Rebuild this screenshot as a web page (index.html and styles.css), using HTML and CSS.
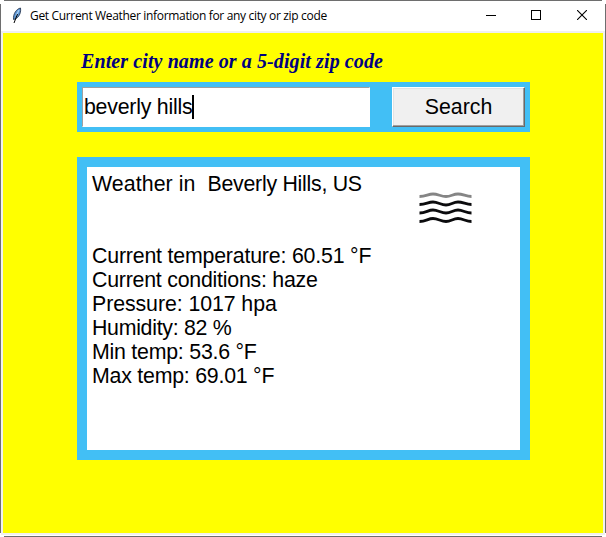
FILE: index.html
```html
<!DOCTYPE html>
<html lang="en">
<head>
<meta charset="utf-8">
<title>Get Current Weather information for any city or zip code</title>
<link rel="stylesheet" href="styles.css">
</head>
<body>
<div class="window">
  <header class="titlebar">
    <svg class="feather" width="12" height="17" viewBox="0 0 12 17">
      <path d="M9.500 1C5.500 2 2 6.500 2.500 12.500C6.500 12 10.500 7 9.500 1Z" fill="#5b93d0" stroke="#1c2a42" stroke-width=".8"/>
      <path d="M8 3L5 9" stroke="#a9d0f5" stroke-width="1.200"/>
      <path d="M6.500 7L3 16" stroke="#000" stroke-width="1"/>
    </svg>
    <span class="title">Get Current Weather information for any city or zip code</span>
    <div class="controls">
      <svg width="10" height="10" viewBox="0 0 10 10" shape-rendering="crispEdges"><path d="M0 5.500H10" stroke="#000"/></svg>
      <svg width="10" height="10" viewBox="0 0 10 10" shape-rendering="crispEdges"><path d="M.5 .5H9.500V9.500H.5Z" fill="none" stroke="#000"/></svg>
      <svg class="close" width="10" height="10" viewBox="0 0 10 10"><path d="M0 0L10 10M10 0L0 10" stroke="#000" stroke-width="1.100"/></svg>
    </div>
  </header>
  <main class="client">
    <div class="prompt">Enter city name or a 5-digit zip code</div>
    <div class="search">
      <div class="entry"><span class="query">beverly hills</span><span class="caret"></span></div>
      <button class="button" type="button">Search</button>
    </div>
    <section class="result">
      <div class="report">
        <div class="place"><span class="lead">Weather in  </span><span class="city">Beverly Hills, US</span></div>
        <div class="temperature">Current temperature: 60.51 °F</div>
        <div class="reading">Current conditions: haze</div>
        <div class="pressure">Pressure: 1017 hpa</div>
        <div class="humidity">Humidity: 82 %</div>
        <div class="reading">Min temp: 53.6 °F</div>
        <div class="reading">Max temp: 69.01 °F</div>
      </div>
      <svg class="haze" width="54" height="34" viewBox="0 0 54 34" fill="none" stroke="#0b0b0d" stroke-width="2.800">
        <path stroke="#858585" d="M.5 5.500C7 5.500 9 3 14 3S22 5.500 27 5.500S34 3 39 3S47 5.500 52.500 5.500"/>
        <path d="M.5 13.500C7 13.500 9 11 14 11S22 14 27 14S34 11 39 11S47 13.500 52.500 13.500"/>
        <path d="M.5 22C7 22 9 19 14 19S22 22 27 22S34 19 39 19S47 22 52.500 22"/>
        <path d="M.5 30.500C7 30.500 9 27.500 14 27.500S22 30.500 27 30.500S34 27.500 39 27.500S47 30.500 52.500 30.500"/>
      </svg>
    </section>
  </main>
</div>
</body>
</html>
```
FILE: styles.css
```css
* { box-sizing: border-box; }
body { margin: 0; background: #fff; }
.window {
  width: 606px;
  height: 537px;
  padding: 1px 3px 4px;
  background:
    linear-gradient(#6e6e6e, #6e6e6e) 4px 0 / 598px 1px no-repeat,
    linear-gradient(#6e6e6e, #6e6e6e) 4px 536px / 598px 1px no-repeat,
    linear-gradient(#6e6e6e, #6e6e6e) 0 4px / 1px 529px no-repeat,
    linear-gradient(#6e6e6e, #6e6e6e) 605px 4px / 1px 529px no-repeat,
    linear-gradient(#f0f0f0, #f0f0f0) 1px 31px / 604px 504px no-repeat,
    #fff;
}
.titlebar {
  display: flex;
  align-items: center;
  height: 30px;
  padding-left: 8px;
  margin-bottom: 2px;
}
.feather { margin: -2px 7px 0 0; }
.title {
  font: 12px/16px "Open Sans", "Noto Sans", sans-serif;
  letter-spacing: -0.33px;
  white-space: nowrap;
  color: #000;
}
.controls { display: flex; gap: 35px; margin: -2px 16px 0 auto; }
.close { margin-left: 1px; }
.client { height: 500px; padding: 16px 73px 0 74px; background: #ff0; }
.prompt {
  height: 33px;
  padding-left: 4px;
  font: italic bold 20px/24px "Liberation Serif", serif;
  letter-spacing: 0.1px;
  color: #000080;
  white-space: nowrap;
}
.search {
  display: flex;
  justify-content: space-between;
  height: 50px;
  padding: 5px;
  background: #42bff5;
}
.entry {
  display: flex;
  align-items: center;
  width: 288px;
  height: 40px;
  border: 1px solid #fff;
  border-top-color: #a0a0a0;
  border-left-color: #a0a0a0;
  background: #fff;
}
.entry, .button, .report { font: 21.33px/24px "Liberation Sans", Arial, sans-serif; color: #000; }
.query { padding-left: 1px; letter-spacing: -0.24px; white-space: pre; }
.caret { width: 2px; height: 24px; background: #000; }
.button {
  width: 133px;
  height: 40px;
  padding: 0;
  border: 1px solid;
  border-color: #fff #696969 #696969 #fff;
  box-shadow: inset -1px -1px #a0a0a0, inset 1px 1px #e3e3e3;
  background: #f0f0f0;
}
.result {
  display: flex;
  align-items: flex-start;
  height: 303px;
  margin-top: 25px;
  padding: 5px 0 0 5px;
  border: 10px solid #42bff5;
  background: #fff;
}
.report { width: 327px; white-space: nowrap; }
.place { margin-bottom: 48px; white-space: pre; }
.lead { letter-spacing: 0.08px; }
.city { letter-spacing: -0.27px; }
.temperature { letter-spacing: -0.19px; }
.reading { letter-spacing: -0.23px; }
.pressure { letter-spacing: -0.08px; }
.humidity { letter-spacing: -0.29px; }
.haze { margin-top: 19px; }
```
